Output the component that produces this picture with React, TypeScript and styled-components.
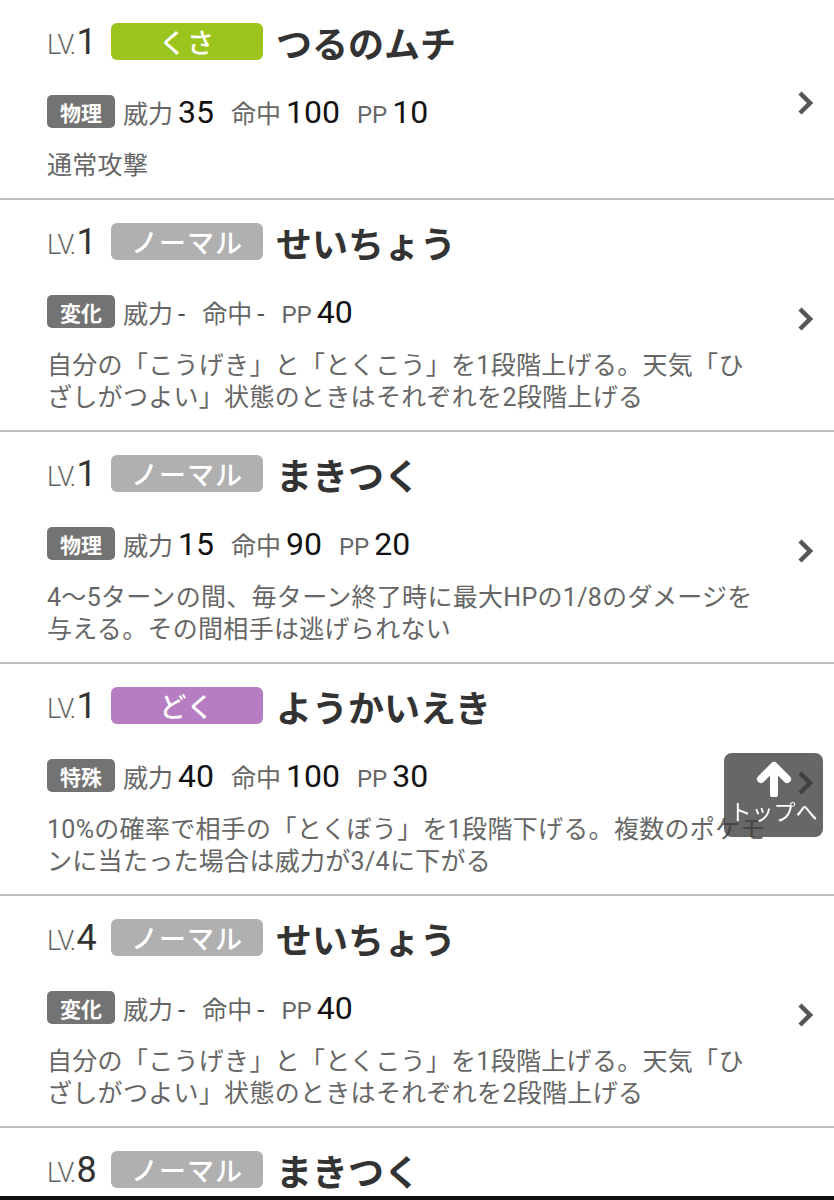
import React from "react";
import styled, { createGlobalStyle } from "styled-components";

const GlobalStyle = createGlobalStyle`
  html, body { margin: 0; padding: 0; background: #fff; }
  body { font-family: Roboto, "Noto Sans CJK JP", sans-serif; }
`;

const Page = styled.div`
  height: 1196px;
  overflow: hidden;
  border-bottom: 4px solid #111;
  background: #fff;
`;

const Move = styled.section`
  display: grid;
  grid-template-columns: 1fr 36px;
  align-items: center;
  padding: 23px 21px 16px 47px;
  border-bottom: 2px solid #bdbdbd;
`;

const Content = styled.div`
  display: flex;
  flex-direction: column;
  min-width: 0;
`;

const Header = styled.div`
  display: flex;
  align-items: center;
  height: 37px;
`;

const Lv = styled.span`
  display: inline-flex;
  align-items: baseline;
  width: 64px;
  color: #666;
  font-size: 27px;
  font-weight: 300;
  letter-spacing: -1.5px;
`;

const LvNum = styled.span`
  color: #333;
  font-size: 36px;
  font-weight: 400;
  letter-spacing: 0;
  margin-left: 2px;
`;

const TypeBadge = styled.span<{ $bg: string }>`
  display: flex;
  align-items: center;
  justify-content: center;
  width: 152px;
  height: 37px;
  border-radius: 6px;
  background: ${(p) => p.$bg};
  color: #fff;
  font-family: "Noto Sans CJK JP", sans-serif;
  font-size: 27px;
  font-weight: 500;
  letter-spacing: 1px;
`;

const Name = styled.span`
  margin-left: 13px;
  color: #333;
  font-family: "Noto Sans CJK JP", sans-serif;
  font-size: 36px;
  font-weight: 700;
  line-height: 1;
`;

const Stats = styled.div`
  display: flex;
  align-items: center;
  height: 33px;
  margin-top: 35px;
`;

const CatBadge = styled.span`
  display: flex;
  align-items: center;
  justify-content: center;
  width: 68px;
  height: 33px;
  border-radius: 5px;
  background: #737373;
  color: #fff;
  font-family: "Noto Sans CJK JP", sans-serif;
  font-size: 21px;
  font-weight: 700;
  margin-right: 8px;
`;

const Stat = styled.span`
  display: inline-flex;
  align-items: baseline;
  margin-right: 17px;
`;

const Label = styled.span<{ $small?: boolean }>`
  color: #666;
  font-family: ${(p) => (p.$small ? "Roboto, sans-serif" : '"Noto Sans CJK JP", sans-serif')};
  font-size: ${(p) => (p.$small ? "24px" : "25px")};
  font-weight: 400;
  margin-right: 5px;
`;

const Value = styled.span<{ $dash?: boolean }>`
  color: ${(p) => (p.$dash ? "#555" : "#111")};
  font-family: Roboto, sans-serif;
  font-size: ${(p) => (p.$dash ? "26px" : "32px")};
  font-weight: 400;
`;

const Desc = styled.p`
  margin: 22px 0 0;
  width: 721.5px;
  color: #666;
  font-family: Roboto, "Noto Sans CJK JP", sans-serif;
  font-size: 25px;
  line-height: 32px;
  letter-spacing: 0.3px;
  font-weight: 400;
`;

const ChevronBox = styled.div`
  display: flex;
  justify-content: flex-end;
  align-items: center;
  align-self: center;
`;

const TopButton = styled.button`
  position: fixed;
  top: 753px;
  left: 724px;
  width: 99px;
  height: 84px;
  border: none;
  border-radius: 8px;
  background: rgba(60, 60, 60, 0.78);
  display: flex;
  flex-direction: column;
  align-items: center;
  padding: 8px 0 0;
  cursor: pointer;
`;

const TopLabel = styled.span`
  color: #fff;
  font-family: "Noto Sans CJK JP", sans-serif;
  font-size: 22px;
  line-height: 24px;
  margin-top: 1px;
  white-space: nowrap;
`;

const Chevron = () => (
  <svg width="16" height="26" viewBox="0 0 16 26">
    <polyline
      points="3,3 13,13 3,23"
      fill="none"
      stroke="#555"
      strokeWidth="4.5"
      strokeLinejoin="miter"
    />
  </svg>
);

const UpArrow = () => (
  <svg width="36" height="36" viewBox="0 0 36 36">
    <line x1="18" y1="33" x2="18" y2="9" stroke="#fff" strokeWidth="8" strokeLinecap="round" />
    <polyline
      points="5,18 18,5 31,18"
      fill="none"
      stroke="#fff"
      strokeWidth="8"
      strokeLinecap="round"
      strokeLinejoin="round"
    />
  </svg>
);

type MoveData = {
  lv: number;
  type: string;
  color: string;
  name: string;
  cat: string;
  power: string;
  acc: string;
  pp: string;
  desc: string;
};

const moves: MoveData[] = [
  { lv: 1, type: "くさ", color: "#9bc41c", name: "つるのムチ", cat: "物理", power: "35", acc: "100", pp: "10", desc: "通常攻撃" },
  {
    lv: 1, type: "ノーマル", color: "#b0b0b0", name: "せいちょう", cat: "変化", power: "-", acc: "-", pp: "40",
    desc: "自分の「こうげき」と「とくこう」を1段階上げる。天気「ひざしがつよい」状態のときはそれぞれを2段階上げる",
  },
  {
    lv: 1, type: "ノーマル", color: "#b0b0b0", name: "まきつく", cat: "物理", power: "15", acc: "90", pp: "20",
    desc: "4〜5ターンの間、毎ターン終了時に最大HPの1/8のダメージを与える。その間相手は逃げられない",
  },
  {
    lv: 1, type: "どく", color: "#b77dc2", name: "ようかいえき", cat: "特殊", power: "40", acc: "100", pp: "30",
    desc: "10%の確率で相手の「とくぼう」を1段階下げる。複数のポケモンに当たった場合は威力が3/4に下がる",
  },
  {
    lv: 4, type: "ノーマル", color: "#b0b0b0", name: "せいちょう", cat: "変化", power: "-", acc: "-", pp: "40",
    desc: "自分の「こうげき」と「とくこう」を1段階上げる。天気「ひざしがつよい」状態のときはそれぞれを2段階上げる",
  },
  {
    lv: 8, type: "ノーマル", color: "#b0b0b0", name: "まきつく", cat: "物理", power: "15", acc: "90", pp: "20",
    desc: "4〜5ターンの間、毎ターン終了時に最大HPの1/8のダメージを与える。その間相手は逃げられない",
  },
];

export default function App() {
  return (
    <>
      <GlobalStyle />
      <Page>
        {moves.map((m, i) => (
          <Move key={i}>
            <Content>
              <Header>
                <Lv>
                  LV.<LvNum>{m.lv}</LvNum>
                </Lv>
                <TypeBadge $bg={m.color}>{m.type}</TypeBadge>
                <Name>{m.name}</Name>
              </Header>
              <Stats>
                <CatBadge>{m.cat}</CatBadge>
                <Stat>
                  <Label>威力</Label>
                  <Value $dash={m.power === "-"}>{m.power}</Value>
                </Stat>
                <Stat>
                  <Label>命中</Label>
                  <Value $dash={m.acc === "-"}>{m.acc}</Value>
                </Stat>
                <Stat>
                  <Label $small>PP</Label>
                  <Value>{m.pp}</Value>
                </Stat>
              </Stats>
              <Desc>{m.desc}</Desc>
            </Content>
            <ChevronBox>
              <Chevron />
            </ChevronBox>
          </Move>
        ))}
      </Page>
      <TopButton aria-label="トップへ">
        <UpArrow />
        <TopLabel>トップへ</TopLabel>
      </TopButton>
    </>
  );
}
